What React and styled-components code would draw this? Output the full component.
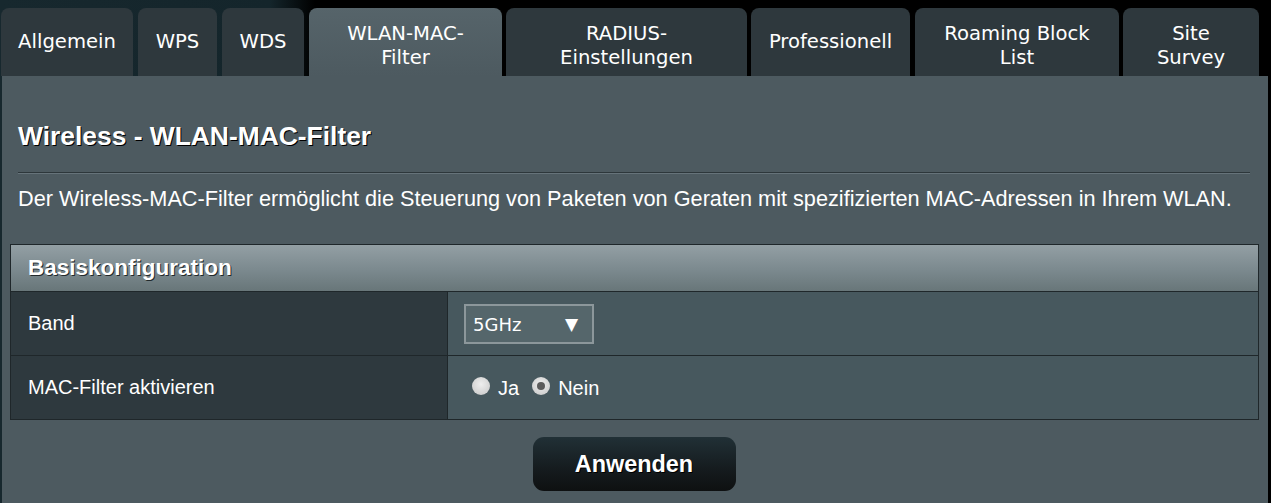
import React from "react";
import styled, { createGlobalStyle } from "styled-components";

const GlobalStyle = createGlobalStyle`
  html, body {
    margin: 0;
    padding: 0;
    height: 100%;
    overflow: hidden;
  }
  body {
    background: linear-gradient(90deg, #17282e 0, #14252b 270px, #000 315px, #000 100%);
    font-family: "Liberation Sans", Arial, sans-serif;
    color: #fff;
  }
`;

const Page = styled.div`
  width: 1271px;
  height: 503px;
  display: flex;
  flex-direction: column;
`;

const TabBar = styled.div`
  display: flex;
  align-items: flex-end;
  gap: 5px;
  padding: 8px 0 0 1px;
  height: 68px;
`;

const Tab = styled.div`
  width: ${(p) => p.$w}px;
  height: 68px;
  box-sizing: border-box;
  margin-right: ${(p) => (p.$tight ? -1 : 0)}px;
  border-radius: 8px 8px 0 0;
  background: ${(p) =>
    p.$active ? "linear-gradient(180deg, #56646a 0%, #4d5a60 100%)" : "#2e383d"};
  display: flex;
  align-items: center;
  justify-content: center;
  text-align: center;
  font-family: "DejaVu Sans", Verdana, sans-serif;
  font-size: 19.6px;
  line-height: 24.5px;
  color: #fff;
  padding: ${(p) => (p.$multi ? "8px 4px 0" : "0 4px")};
`;

const Panel = styled.div`
  margin-left: 2px;
  width: 1266px;
  flex: 1;
  background: #4d5a60;
  padding: 40px 9px 0 8px;
  box-sizing: border-box;
`;

const Heading = styled.h1`
  margin: 0 10px 0 8px;
  font-size: 26.4px;
  line-height: 40px;
  font-weight: bold;
  text-shadow: 1px 1px 0 #000;
`;

const Rule = styled.div`
  margin: 16px 9px 0 8px;
  height: 1px;
  background: #2d373b;
  border-bottom: 1px solid #66737a;
`;

const Description = styled.p`
  margin: 13px 0 0 8px;
  font-size: 21.7px;
  line-height: 24px;
  color: #fff;
  white-space: nowrap;
`;

const Table = styled.div`
  margin-top: 33px;
  border: 1px solid #1f272a;
  display: grid;
  grid-template-columns: 437px 1fr;
`;

const TableHead = styled.div`
  grid-column: 1 / -1;
  height: 47px;
  box-sizing: border-box;
  padding-left: 17px;
  display: flex;
  align-items: center;
  background: linear-gradient(180deg, #939fa4 0%, #7b898e 55%, #687679 100%);
  font-weight: bold;
  font-size: 22.5px;
  text-shadow: 1px 1px 0 #22292c;
  border-bottom: 1px solid #1f272a;
`;

const LabelCell = styled.div`
  height: ${(p) => (p.$last ? 63 : 64)}px;
  box-sizing: border-box;
  background: #2e393e;
  border-right: 1px solid #1f272a;
  border-bottom: ${(p) => (p.$last ? "none" : "1px solid #1f272a")};
  padding-left: 17px;
  display: flex;
  align-items: center;
  font-size: 20px;
`;

const ValueCell = styled.div`
  height: ${(p) => (p.$last ? 63 : 64)}px;
  box-sizing: border-box;
  background: #47585e;
  border-bottom: ${(p) => (p.$last ? "none" : "1px solid #1f272a")};
  padding-left: 16px;
  display: flex;
  align-items: center;
  font-size: 20px;
`;

const Select = styled.div`
  width: 130px;
  height: 40px;
  box-sizing: border-box;
  border: 2px solid #8c979b;
  background: #55666b;
  display: flex;
  align-items: center;
  justify-content: space-between;
  padding: 0 14px 0 7px;
  font-family: "DejaVu Sans", Verdana, sans-serif;
  font-size: 18px;
  margin-top: 1px;
`;

const Arrow = styled.span`
  font-size: 17px;
`;

const RadioGroup = styled.div`
  display: flex;
  align-items: center;
  padding-left: 8px;
  margin-top: 2px;
`;

const Radio = styled.span`
  width: 18px;
  height: 18px;
  border-radius: 50%;
  box-sizing: border-box;
  background: radial-gradient(circle at 50% 40%, #eeeeee 0%, #d2d2d2 70%, #b9b9b9 100%);
  display: inline-flex;
  align-items: center;
  justify-content: center;
  margin-right: 8px;
  position: relative;
  top: -3px;
  &::after {
    content: "";
    width: 8px;
    height: 8px;
    border-radius: 50%;
    background: #5b5b5b;
    display: ${(p) => (p.$checked ? "block" : "none")};
  }
`;

const RadioLabel = styled.span`
  margin-right: 13px;
`;

const ButtonRow = styled.div`
  display: flex;
  justify-content: center;
  margin-top: 17px;
`;

const Button = styled.div`
  width: 203px;
  height: 54px;
  border-radius: 11px;
  background: linear-gradient(180deg, #213036 0%, #151b1e 60%, #0e1011 100%);
  display: flex;
  align-items: center;
  justify-content: center;
  font-weight: bold;
  font-size: 23.4px;
  text-shadow: 1px 1px 0 #000;
  margin-left: -1px;
`;

const tabs = [
  { label: "Allgemein", w: 132 },
  { label: "WPS", w: 79 },
  { label: "WDS", w: 82 },
  { label: ["WLAN-MAC-", "Filter"], w: 193, active: true, tight: true },
  { label: ["RADIUS-", "Einstellungen"], w: 241, tight: true },
  { label: "Professionell", w: 159 },
  { label: ["Roaming Block", "List"], w: 204, tight: true },
  { label: ["Site", "Survey"], w: 136 },
];

export default function App() {
  return (
    <>
      <GlobalStyle />
      <Page>
        <TabBar>
          {tabs.map((t, i) => {
            const multi = Array.isArray(t.label);
            return (
              <Tab key={i} $w={t.w} $active={t.active} $tight={t.tight} $multi={multi}>
                <div>{multi ? t.label.map((l, j) => <div key={j}>{l}</div>) : t.label}</div>
              </Tab>
            );
          })}
        </TabBar>
        <Panel>
          <Heading>Wireless - WLAN-MAC-Filter</Heading>
          <Rule />
          <Description>
            Der Wireless-MAC-Filter ermöglicht die Steuerung von Paketen von Geraten mit
            spezifizierten MAC-Adressen in Ihrem WLAN.
          </Description>
          <Table>
            <TableHead>Basiskonfiguration</TableHead>
            <LabelCell>Band</LabelCell>
            <ValueCell>
              <Select>
                <span>5GHz</span>
                <Arrow>▼</Arrow>
              </Select>
            </ValueCell>
            <LabelCell $last>MAC-Filter aktivieren</LabelCell>
            <ValueCell $last>
              <RadioGroup>
                <Radio />
                <RadioLabel>Ja</RadioLabel>
                <Radio $checked />
                <RadioLabel>Nein</RadioLabel>
              </RadioGroup>
            </ValueCell>
          </Table>
          <ButtonRow>
            <Button>Anwenden</Button>
          </ButtonRow>
        </Panel>
      </Page>
    </>
  );
}
